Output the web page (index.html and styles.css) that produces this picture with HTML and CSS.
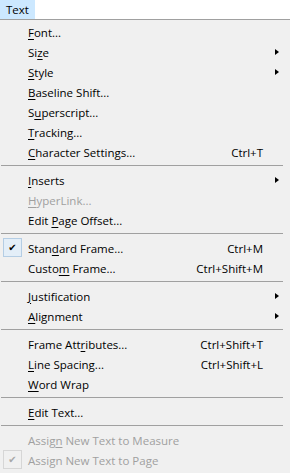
FILE: index.html
```html
<!DOCTYPE html>
<html lang="en">
<head>
    <meta charset="UTF-8">
    <title>Text Menu</title>
    <link rel="stylesheet" href="styles.css">
</head>
<body>
    <!-- Menu bar -->
    <div class="menubar">
        <span class="menubar-item active">Text</span>
    </div>

    <!-- Dropdown -->
    <div class="menu">
        <div class="menu-item"><span class="label"><u>F</u>ont...</span></div>
        <div class="menu-item sub"><span class="label">Si<u>z</u>e</span></div>
        <div class="menu-item sub"><span class="label"><u>S</u>tyle</span></div>
        <div class="menu-item"><span class="label"><u>B</u>aseline Shift...</span></div>
        <div class="menu-item"><span class="label">S<u>u</u>perscript...</span></div>
        <div class="menu-item"><span class="label"><u>T</u>racking...</span></div>
        <div class="menu-item"><span class="label"><u>C</u>haracter Settings...</span><span class="shortcut">Ctrl+T</span></div>
        <div class="separator"></div>
        <div class="menu-item sub"><span class="label"><u>I</u>nserts</span></div>
        <div class="menu-item disabled"><span class="label"><u>H</u>yperLink...</span></div>
        <div class="menu-item"><span class="label">Edit <u>P</u>age Offset...</span></div>
        <div class="separator"></div>
        <div class="menu-item checked"><span class="label">Stan<u>d</u>ard Frame...</span><span class="shortcut">Ctrl+M</span></div>
        <div class="menu-item"><span class="label">Custo<u>m</u> Frame...</span><span class="shortcut">Ctrl+Shift+M</span></div>
        <div class="separator"></div>
        <div class="menu-item sub"><span class="label"><u>J</u>ustification</span></div>
        <div class="menu-item sub"><span class="label"><u>A</u>lignment</span></div>
        <div class="separator"></div>
        <div class="menu-item"><span class="label">Frame Att<u>r</u>ibutes...</span><span class="shortcut">Ctrl+Shift+T</span></div>
        <div class="menu-item"><span class="label"><u>L</u>ine Spacing...</span><span class="shortcut">Ctrl+Shift+L</span></div>
        <div class="menu-item"><span class="label"><u>W</u>ord Wrap</span></div>
        <div class="separator"></div>
        <div class="menu-item"><span class="label"><u>E</u>dit Text...</span></div>
        <div class="separator"></div>
        <div class="menu-item disabled"><span class="label">Assig<u>n</u> New Text to Measure</span></div>
        <div class="menu-item disabled checked"><span class="label">Assign New Text to Pa<u>g</u>e</span></div>
    </div>
</body>
</html>
```

FILE: styles.css
```css
body {
    margin: 0;
    padding: 0;
    font-family: "Open Sans", "Noto Sans", sans-serif;
    font-size: 11.5px;
    color: #000;
    background: #f0f0f0;
    overflow: hidden;
}

u {
    text-decoration-thickness: 1px;
    text-underline-offset: 2px;
}

/* Menu bar */
.menubar {
    height: 19px;
    background: #ffffff;
    border-bottom: 1px solid #a0a0a0;
    display: flex;
}

.menubar-item {
    display: flex;
    align-items: center;
    padding: 0 6px;
}

.menubar-item.active {
    background: #cce8ff;
}

/* Dropdown */
.menu {
    padding-top: 2px;
    background: #f0f0f0;
}

.menu-item {
    position: relative;
    display: flex;
    align-items: center;
    height: 20px;
    padding-left: 28px;
    padding-right: 27px;
}

.label {
    flex: 1;
    white-space: nowrap;
}

.shortcut {
    white-space: nowrap;
}

.menu-item.disabled {
    color: #a0a0a0;
}

/* Submenu arrow */
.menu-item.sub::after {
    content: "";
    position: absolute;
    right: 11px;
    top: 7px;
    border-left: 4px solid #000;
    border-top: 3.5px solid transparent;
    border-bottom: 3.5px solid transparent;
}

/* Check box */
.menu-item.checked::before {
    content: "\2714";
    position: absolute;
    left: 3px;
    top: 0;
    width: 17px;
    height: 17px;
    border: 1px solid #b4cde4;
    background: #e3eef8;
    display: flex;
    align-items: center;
    justify-content: center;
    font-family: "DejaVu Sans", sans-serif;
    font-size: 10px;
    color: #000;
}

.menu-item.disabled.checked::before {
    border-color: #d6d6d6;
    background: #f0f0f0;
    color: #a8a8a8;
}

.separator {
    height: 1px;
    margin: 3px 7px 4px 1px;
    background: #a0a0a0;
}
```
